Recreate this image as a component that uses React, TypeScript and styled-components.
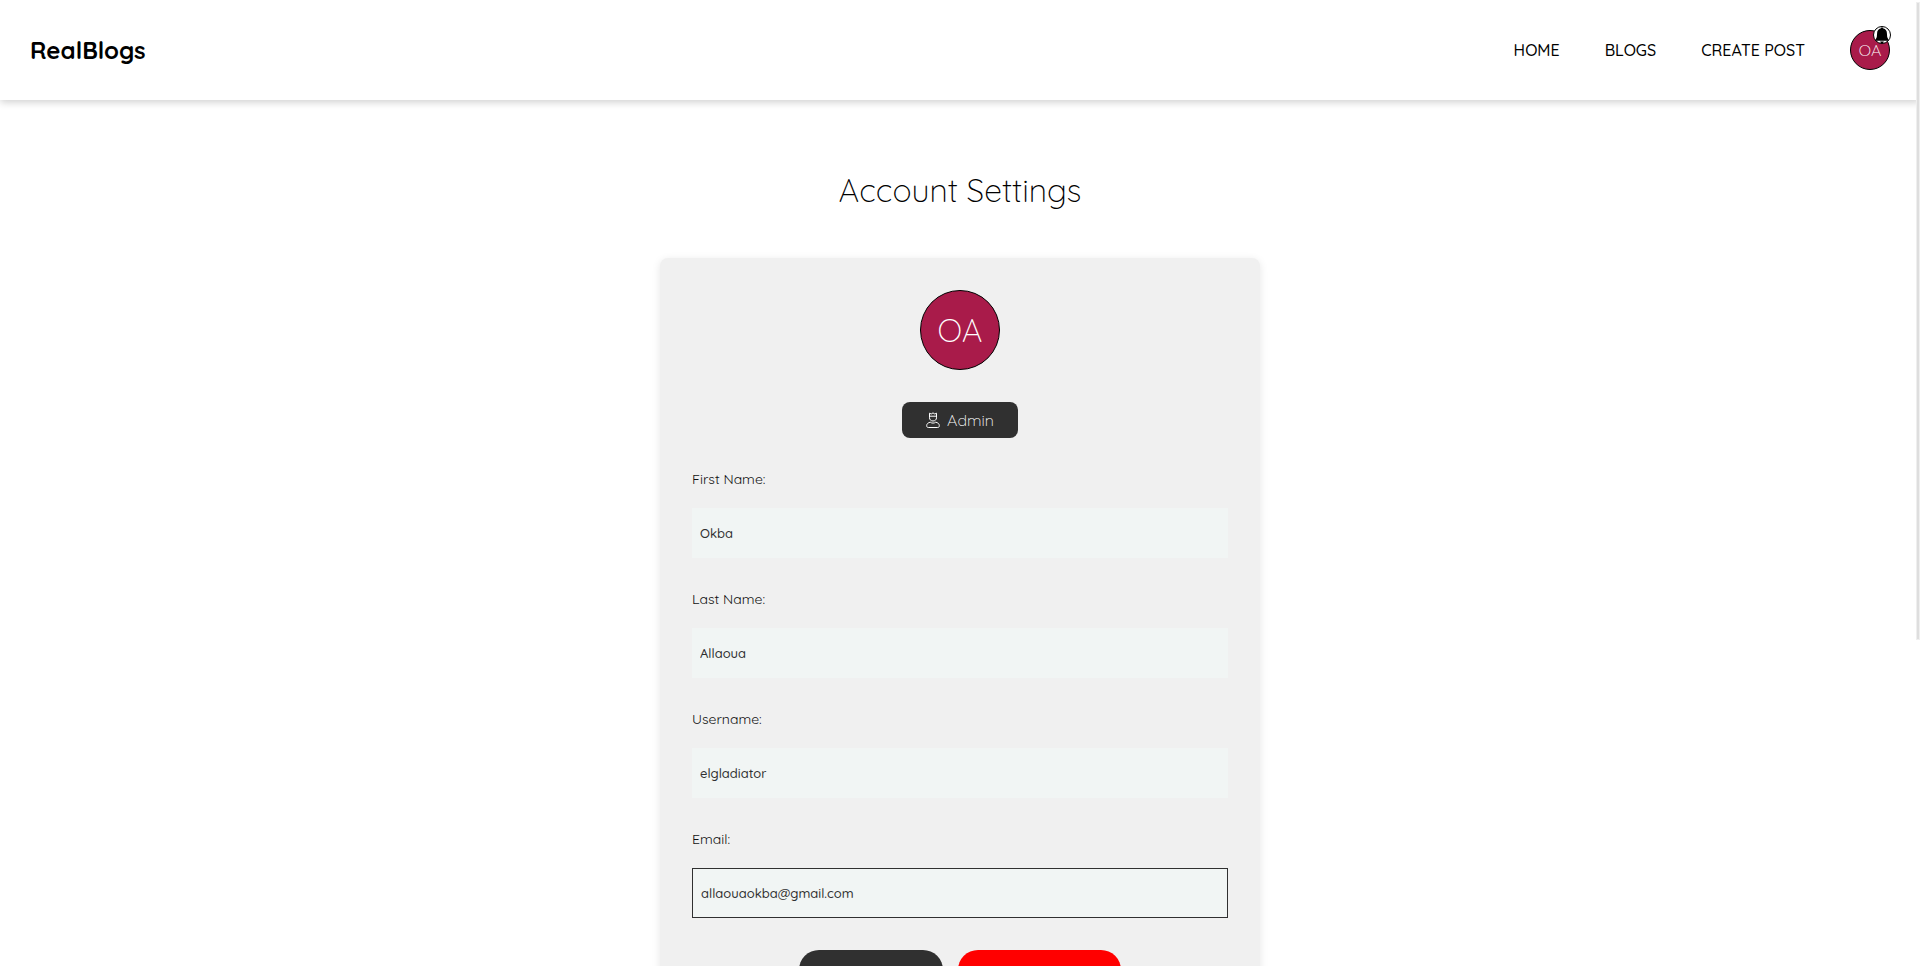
import React from "react";
import styled, { createGlobalStyle } from "styled-components";

const GlobalStyle = createGlobalStyle`
  *, *::before, *::after { box-sizing: border-box; }
  body {
    margin: 0;
    background: #fff;
    color: #000;
    font-family: Quicksand, Lato, "Open Sans", sans-serif;
    font-size: 16px;
  }
`;

const Header = styled.header`
  display: flex;
  align-items: center;
  justify-content: space-between;
  height: 100px;
  padding: 0 30px;
  background: #fff;
  box-shadow: 0 2px 8px rgba(0, 0, 0, 0.2);
`;

const Logo = styled.a`
  color: #000;
  font-size: 24px;
  font-weight: 700;
  text-decoration: none;
`;

const Nav = styled.nav`
  display: flex;
  align-items: center;
  gap: 45px;
`;

const NavLink = styled.a`
  color: #000;
  font-size: 16px;
  font-weight: 500;
  text-decoration: none;
`;

const ProfileButton = styled.button`
  position: relative;
  padding: 0;
  border: 0;
  background: none;
  font: inherit;
  cursor: pointer;
`;

const Avatar = styled.span<{ $size: number; $fontSize: number }>`
  display: flex;
  align-items: center;
  justify-content: center;
  width: ${({ $size }) => $size}px;
  height: ${({ $size }) => $size}px;
  border: 1px solid #000;
  border-radius: 50%;
  background: #a91b4a;
  color: #fff;
  font-size: ${({ $fontSize }) => $fontSize}px;
  font-weight: 300;
`;

const BellBadge = styled.span`
  position: absolute;
  top: -4px;
  right: -1px;
  display: flex;
  width: 18px;
  height: 18px;
`;

const Main = styled.main`
  display: flex;
  flex-direction: column;
  align-items: center;
  padding: 70px 20px 80px;
`;

const Title = styled.h1`
  margin: 0;
  font-size: 32px;
  line-height: 40px;
  font-weight: 300;
`;

const Card = styled.form`
  display: flex;
  flex-direction: column;
  align-items: center;
  gap: 32px;
  width: 100%;
  max-width: 600px;
  margin-top: 48px;
  padding: 32px;
  border-radius: 8px;
  background: #f0f0f0;
  box-shadow: 0 2px 8px rgba(0, 0, 0, 0.1);
`;

const RoleBadge = styled.div`
  display: flex;
  align-items: center;
  gap: 7px;
  height: 36px;
  padding: 0 24px;
  border-radius: 8px;
  background: #303030;
  color: #fff;
  font-size: 16px;
  font-weight: 300;
`;

const Fields = styled.div`
  display: flex;
  flex-direction: column;
  gap: 32px;
  width: 100%;
`;

const Field = styled.div`
  display: flex;
  flex-direction: column;
  gap: 20px;
`;

const Label = styled.label`
  font-size: 14px;
  line-height: 18px;
  color: #111;
`;

const TextInput = styled.input<{ $outlined?: boolean }>`
  width: 100%;
  height: 50px;
  padding: 0 8px;
  border: ${({ $outlined }) => ($outlined ? "1px solid #303030" : "0")};
  border-radius: 0;
  outline: none;
  background: #f1f5f4;
  color: #303030;
  font-family: inherit;
  font-size: 13px;
  font-weight: 500;
`;

const Actions = styled.div`
  display: flex;
  gap: 15px;
`;

const ActionButton = styled.button<{ $danger?: boolean }>`
  height: 56px;
  min-width: ${({ $danger }) => ($danger ? 163 : 144)}px;
  padding: 0 16px;
  border: 0;
  border-radius: 20px;
  background: ${({ $danger }) => ($danger ? "#f00" : "#303030")};
  color: #fff;
  font-family: inherit;
  font-size: 13px;
  cursor: pointer;
`;

const ScrollThumb = styled.div`
  position: fixed;
  top: 2px;
  right: 0;
  width: 4px;
  height: 66vh;
  border: 1px solid #efefef;
  background: #dedede;
`;

const BellIcon = () => (
  <svg width="18" height="18" viewBox="0 0 18 18" aria-hidden="true">
    <circle cx="9" cy="9" r="8.5" fill="#fff" stroke="#000" strokeWidth="1" />
    <path
      d="M9 1.500c.8 0 1.200.4 1.300 1C12.700 3 13.900 4.800 13.900 7.200l.3 3.800 1.300 2.800v1h-13v-1L3.800 11l.3-3.800c0-2.400 1.200-4.200 3.600-4.700.1-.6.500-1 1.300-1z"
      fill="#000"
    />
    <path d="M7.200 15.400h3.600c-.2 1.200-.9 1.800-1.800 1.800s-1.600-.6-1.800-1.800z" fill="#000" />
  </svg>
);

const AdminIcon = () => (
  <svg width="14" height="16" viewBox="0 0 14 16" fill="none" stroke="#fff" strokeWidth="1" strokeLinejoin="round" aria-hidden="true">
    <path d="M3.500 1.200 5.200 2 7 .9 8.800 2l1.700-.8v4.600C10.500 7.700 9 9 7 9S3.500 7.700 3.500 5.800z" />
    <path d="M3.500 4.200h7" />
    <path d="M4.300 10.200C2 10.600.7 12 .7 13.600c0 1.300.5 1.900 1.600 1.900h9.400c1.100 0 1.600-.6 1.600-1.900 0-1.600-1.300-3-3.600-3.400C8.300 11.400 5.700 11.400 4.300 10.200z" />
  </svg>
);

const links = ["HOME", "BLOGS", "CREATE POST"];

const fields = [
  { id: "firstName", label: "First Name:", value: "Okba", type: "text" },
  { id: "lastName", label: "Last Name:", value: "Allaoua", type: "text" },
  { id: "username", label: "Username:", value: "elgladiator", type: "text" },
  { id: "email", label: "Email:", value: "allaouaokba@gmail.com", type: "email", outlined: true },
];

export default function App() {
  return (
    <>
      <GlobalStyle />
      <Header>
        <Logo href="#">RealBlogs</Logo>
        <Nav>
          {links.map((link) => (
            <NavLink key={link} href="#">
              {link}
            </NavLink>
          ))}
          <ProfileButton type="button" aria-label="Profile and notifications">
            <Avatar $size={40} $fontSize={16}>OA</Avatar>
            <BellBadge>
              <BellIcon />
            </BellBadge>
          </ProfileButton>
        </Nav>
      </Header>
      <Main>
        <Title>Account Settings</Title>
        <Card>
          <Avatar $size={80} $fontSize={32}>OA</Avatar>
          <RoleBadge>
            <AdminIcon />
            Admin
          </RoleBadge>
          <Fields>
            {fields.map(({ id, label, value, type, outlined }) => (
              <Field key={id}>
                <Label htmlFor={id}>{label}</Label>
                <TextInput id={id} type={type} defaultValue={value} $outlined={outlined} />
              </Field>
            ))}
          </Fields>
          <Actions>
            <ActionButton type="submit" aria-label="Edit Profile" />
            <ActionButton type="button" aria-label="Delete Account" $danger />
          </Actions>
        </Card>
      </Main>
      <ScrollThumb />
    </>
  );
}
